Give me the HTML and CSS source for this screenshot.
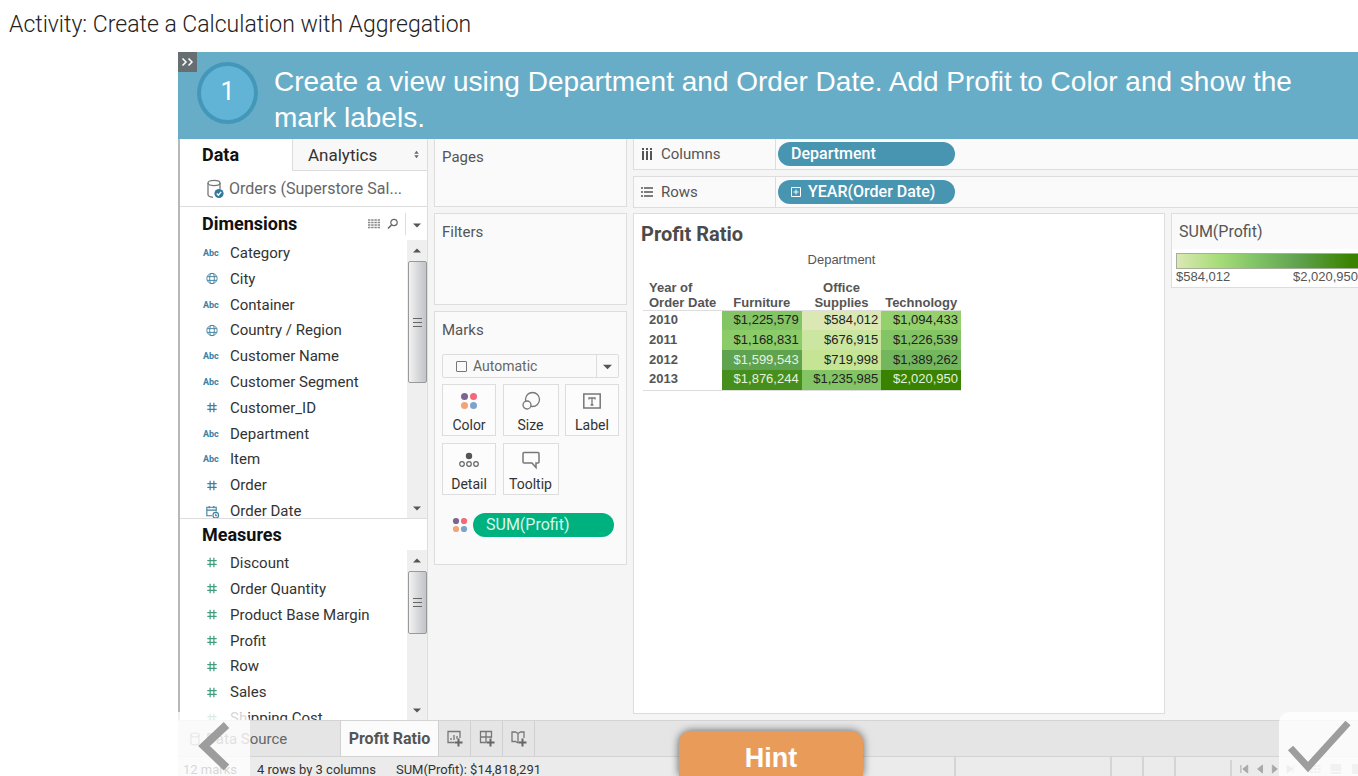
FILE: index.html
```
<!DOCTYPE html>
<html lang="en">
<head>
<meta charset="utf-8">
<title>Activity: Create a Calculation with Aggregation</title>
<link rel="stylesheet" href="styles.css">
</head>
<body>
<svg class="defs" aria-hidden="true">
  <symbol id="hash" viewBox="0 0 16 16"><path d="M6 3v10M10 3v10M3 6h10M3 10h10" fill="none" stroke="currentColor" stroke-width="1.3"/></symbol>
  <symbol id="globe" viewBox="0 0 16 16"><g fill="none" stroke="currentColor" stroke-width="1"><circle cx="8" cy="8" r="5.500"/><ellipse cx="8" cy="8" rx="2.500" ry="5.500"/><path d="M3 6h10M3 10h10"/></g></symbol>
  <symbol id="date" viewBox="0 0 16 16"><g fill="none" stroke="currentColor" stroke-width="1.2"><path d="M8 12.5H2.5v-9h10V8M2.5 6.5h10M5 2v2.500M10 2v2.500"/><circle cx="12" cy="12" r="3"/><path d="M12 10.500v2h1.500"/></g></symbol>
  <symbol id="dots" viewBox="0 0 18 18"><circle cx="4.500" cy="4.500" r="3.500" fill="#7b6591"/><circle cx="13.500" cy="4.500" r="3.500" fill="#f4687a"/><circle cx="4.500" cy="13.500" r="3.500" fill="#f2a377"/><circle cx="13.500" cy="13.500" r="3.500" fill="#7da3cb"/></symbol>
  <symbol id="up" viewBox="0 0 10 10"><path d="M0 8l5-5 5 5z" fill="#555"/></symbol>
  <symbol id="down" viewBox="0 0 10 10"><path d="M0 3h10l-5 5z" fill="#555"/></symbol>
  <symbol id="plus" viewBox="0 0 18 18"><path d="M12.500 8.500v8M8.500 12.500h8" stroke="#666" stroke-width="2" fill="none"/></symbol>
</svg>

<h1 class="title">Activity: Create a Calculation with Aggregation</h1>
<main class="stage">
  <header class="banner">
    <button class="expand" aria-label="Expand"><svg viewBox="0 0 19 20"><path d="M4.500 6.500l3.500 3.500-3.500 3.500M10.500 6.500l3.500 3.500-3.500 3.500" fill="none" stroke="#fff" stroke-width="1.500"/></svg></button>
    <span class="step">1</span>
    <p class="task">Create a view using Department and Order Date. Add Profit to Color and show the mark labels.</p>
  </header>

  <div class="work">
    <aside class="side">
      <div class="tabs">
        <button class="tab on">Data</button>
        <button class="tab">Analytics<svg class="sort" viewBox="0 0 8 12"><path d="M1 5l3-4 3 4zM1 7l3 4 3-4z" fill="#667"/></svg></button>
      </div>
      <div class="source">
        <svg class="db" viewBox="0 0 18 20"><g fill="none" stroke="#777" stroke-width="1.300"><ellipse cx="8" cy="4" rx="6" ry="2.600"/><path d="M2 4v11.500c0 1.500 2 2.500 5 2.800M14 4v6"/></g><circle cx="13" cy="14.500" r="4.600" fill="#2f7ba0"/><path d="M10.800 14.500l1.600 1.700 2.800-3.300" fill="none" stroke="#fff" stroke-width="1.400"/></svg>
        <span>Orders (Superstore Sal...</span>
      </div>
      <section class="pane dims">
        <div class="pane-head">
          <h2>Dimensions</h2>
          <svg class="grid-i" viewBox="0 0 14 12"><path d="M1 2h12M1 4.500h12M1 7h12M1 9.500h12" stroke="#888" stroke-width="1.600" stroke-dasharray="2.400 .8"/></svg>
          <svg class="find" viewBox="0 0 12 12"><circle cx="7" cy="4.500" r="3.200" fill="none" stroke="#666" stroke-width="1.200"/><path d="M4.500 7L1 10.500" stroke="#666" stroke-width="1.600"/></svg>
          <button class="menu" aria-label="Menu"><svg><use href="#down"/></svg></button>
        </div>
        <div class="scroll">
          <ul class="fields">
            <li><b>Abc</b>Category</li>
            <li><svg><use href="#globe"/></svg>City</li>
            <li><b>Abc</b>Container</li>
            <li><svg><use href="#globe"/></svg>Country / Region</li>
            <li><b>Abc</b>Customer Name</li>
            <li><b>Abc</b>Customer Segment</li>
            <li><svg><use href="#hash"/></svg>Customer_ID</li>
            <li><b>Abc</b>Department</li>
            <li><b>Abc</b>Item</li>
            <li><svg><use href="#hash"/></svg>Order</li>
            <li><svg><use href="#date"/></svg>Order Date</li>
          </ul>
          <div class="bar"><svg><use href="#up"/></svg><i class="thumb long"></i><svg class="end"><use href="#down"/></svg></div>
        </div>
      </section>
      <section class="pane meas">
        <div class="pane-head"><h2>Measures</h2></div>
        <div class="scroll">
          <ul class="fields green">
            <li><svg><use href="#hash"/></svg>Discount</li>
            <li><svg><use href="#hash"/></svg>Order Quantity</li>
            <li><svg><use href="#hash"/></svg>Product Base Margin</li>
            <li><svg><use href="#hash"/></svg>Profit</li>
            <li><svg><use href="#hash"/></svg>Row</li>
            <li><svg><use href="#hash"/></svg>Sales</li>
            <li><svg><use href="#hash"/></svg>Shipping Cost</li>
          </ul>
          <div class="bar"><svg><use href="#up"/></svg><i class="thumb"></i><svg class="end"><use href="#down"/></svg></div>
        </div>
      </section>
    </aside>

    <div class="cards">
      <section class="card pages"><h3>Pages</h3></section>
      <section class="card filters"><h3>Filters</h3></section>
      <section class="card marks">
        <h3>Marks</h3>
        <div class="type">
          <i class="square"></i>
          <select aria-label="Mark type"><option>Automatic</option></select>
          <span class="arrow"><svg><use href="#down"/></svg></span>
        </div>
        <div class="buttons">
          <button><svg viewBox="0 0 18 18"><use href="#dots"/></svg>Color</button>
          <button><svg viewBox="0 0 18 18" fill="none" stroke="#777" stroke-width="1.300"><circle cx="10.500" cy="7.500" r="7"/><circle cx="5" cy="13" r="4" fill="#fcfcfc"/></svg>Size</button>
          <button><svg viewBox="0 0 18 18" fill="none" stroke="#777" stroke-width="1.500"><path d="M.8 2h16.400v14H.8z"/><path d="M6 7.500V6h6v1.500M9 6v7M7.500 13h3" stroke-width="1.300"/></svg>Label</button>
          <button><svg viewBox="0 0 20 18"><circle cx="10" cy="5" r="3.200" fill="#555"/><g fill="none" stroke="#666" stroke-width="1.200"><circle cx="3" cy="13" r="2.300"/><circle cx="10" cy="13" r="2.300"/><circle cx="17" cy="13" r="2.300"/></g></svg>Detail</button>
          <button><svg viewBox="0 0 18 18"><path d="M2 1.500h14q1 0 1 1V11q0 1-1 1h-2v4.500L10 12H2q-1 0-1-1V2.500q0-1 1-1z" fill="none" stroke="#777" stroke-width="1.500"/></svg>Tooltip</button>
        </div>
        <div class="encoding"><svg><use href="#dots"/></svg><span class="pill profit">SUM(Profit)</span></div>
      </section>
    </div>

    <div class="canvas">
      <div class="shelf first">
        <span class="shelf-name"><svg viewBox="0 0 12 12"><path d="M2 0v2M6 0v2M10 0v2M2 3v9M6 3v9M10 3v9" stroke="#555" stroke-width="2"/></svg>Columns</span>
        <span class="pill">Department</span>
      </div>
      <div class="shelf">
        <span class="shelf-name"><svg viewBox="0 0 12 12"><path d="M0 2h2M0 6h2M0 10h2M3 2h9M3 6h9M3 10h9" stroke="#555" stroke-width="1.600"/></svg>Rows</span>
        <span class="pill"><svg viewBox="0 0 10 10"><path d="M.5.5h9v9h-9zM5 2.500v5M2.500 5h5" fill="none" stroke="#fff"/></svg>YEAR(Order Date)</span>
      </div>
      <div class="results">
        <section class="view">
          <h2>Profit Ratio</h2>
          <table>
            <thead>
              <tr class="super"><td></td><th colspan="3">Department</th></tr>
              <tr><th class="yr">Year of<br>Order Date</th><th>Furniture</th><th>Office<br>Supplies</th><th>Technology</th></tr>
            </thead>
            <tbody>
              <tr><th>2010</th><td class="g4">$1,225,579</td><td class="g1">$584,012</td><td class="g3">$1,094,433</td></tr>
              <tr><th>2011</th><td class="g3b">$1,168,831</td><td class="g2">$676,915</td><td class="g4">$1,226,539</td></tr>
              <tr><th>2012</th><td class="g6">$1,599,543</td><td class="g2b">$719,998</td><td class="g5">$1,389,262</td></tr>
              <tr><th>2013</th><td class="g7">$1,876,244</td><td class="g4">$1,235,985</td><td class="g8">$2,020,950</td></tr>
            </tbody>
          </table>
        </section>
        <section class="legend">
          <h3>SUM(Profit)</h3>
          <div class="ramp"></div>
          <div class="range"><span>$584,012</span><span>$2,020,950</span></div>
        </section>
      </div>
    </div>
  </div>

  <nav class="sheets">
    <button class="sheet ds"><svg viewBox="0 0 10 14"><g fill="none" stroke="#888" stroke-width="1.200"><ellipse cx="5" cy="3" rx="4" ry="2"/><path d="M1 3v8c0 2.500 8 2.500 8 0V3"/></g></svg>Data Source</button>
    <button class="sheet on">Profit Ratio</button>
    <button class="sheet new" aria-label="New worksheet"><svg viewBox="0 0 18 18"><path d="M8 12.500H2v-11h12V8M5 10V8M8 10V5M11 9V6" fill="none" stroke="#777" stroke-width="1.300"/><use href="#plus"/></svg></button>
    <button class="sheet new" aria-label="New dashboard"><svg viewBox="0 0 18 18"><path d="M8 12.500H2.500v-11h11V8M8 1.500v11M2.500 7h11" fill="none" stroke="#777" stroke-width="1.300"/><use href="#plus"/></svg></button>
    <button class="sheet new" aria-label="New story"><svg viewBox="0 0 18 18"><path d="M8 13l-2.500-1.500H2V2h3.500L8 3.500 10.500 2H14v6M8 3.500V13" fill="none" stroke="#777" stroke-width="1.300"/><use href="#plus"/></svg></button>
  </nav>
  <footer class="status">
    <span>12 marks</span><span>4 rows by 3 columns</span><span>SUM(Profit): $14,818,291</span>
    <div class="cells"><i class="c1"></i><i class="c2"></i><i class="c3"></i><i class="c4"></i>
      <svg class="pager" viewBox="0 0 128 18"><path d="M9 5v8M16 5l-5 4 5 4zM31 5l-5 4 5 4zM41 5l5 4-5 4zM56 5l5 4-5 4zM62 5v8" fill="#aaa" stroke="#aaa"/><path d="M79 6h12M79 9h12M79 12h12" stroke="#bbb" stroke-width="2" stroke-dasharray="3 1"/><path d="M100 4h11v7h-11zM100 12h11v2h-11zM122 4h6v10h-6z" fill="#bbb"/></svg>
    </div>
  </footer>

  <button class="nav back" aria-label="Back"><svg viewBox="0 0 72 65"><path d="M48.500 13L26 34l22.500 21.500" fill="none" stroke="#9d9d9d" stroke-width="8"/></svg></button>
  <button class="hint">Hint</button>
  <button class="nav done" aria-label="Done"><svg viewBox="0 0 79 65"><path d="M11.500 36L29 55 69 11" fill="none" stroke="#9d9d9d" stroke-width="7"/></svg></button>
</main>
</body>
</html>
```
FILE: styles.css
```
* { box-sizing: border-box; }
body {
  margin: 0;
  height: 100vh;
  display: flex;
  flex-direction: column;
  overflow: hidden;
  background: #fff;
  color: #333;
  font: 15px/20px Roboto, sans-serif;
}
h1, h2, h3, p, ul { margin: 0; padding: 0; font-weight: 400; }
ul { list-style: none; }
button { font: inherit; color: inherit; background: none; border: 0; padding: 0; margin: 0; border-radius: 0; }
.defs { display: none; }

.title {
  flex: 0 0 52px;
  padding-left: 9px;
  font-size: 23px;
  line-height: 50px;
  font-weight: 300;
  color: #222;
}
.stage {
  position: relative;
  flex: 1;
  min-height: 0;
  margin-left: 178px;
  display: flex;
  flex-direction: column;
  background: #f5f5f5;
  overflow: hidden;
}

.banner {
  flex: none;
  display: flex;
  align-items: flex-start;
  padding-bottom: 3px;
  background: #68adc8;
  color: #fff;
}
.expand { width: 19px; height: 20px; background: #676e71; }
.expand svg { display: block; width: 19px; height: 20px; }
.step {
  width: 61px;
  height: 62px;
  margin: 10px 16px 0 0;
  border: 4px solid #4398ba;
  border-radius: 50%;
  background: #62b4d6;
  font-size: 25px;
  line-height: 52px;
  text-align: center;
}
.task {
  flex: 1;
  padding: 12px 40px 0 0;
  font: 28px/36px "Liberation Sans", Arial, sans-serif;
}

.work {
  flex: 1;
  min-height: 0;
  display: grid;
  grid-template-columns: 250px 193px 1fr;
  column-gap: 6px;
}

.side {
  display: flex;
  flex-direction: column;
  min-height: 0;
  background: #fff;
  border-left: 2px solid #b5b9bb;
  border-right: 1px solid #ddd;
}
.tabs { flex: none; display: flex; height: 32px; }
.tab { font-size: 17px; line-height: 30px; }
.tab.on { width: 112px; padding-left: 22px; text-align: left; font-size: 18px; font-weight: 700; color: #111; }
.tab:not(.on) {
  flex: 1;
  display: flex;
  align-items: center;
  padding-left: 15px;
  background: #f8f8f8;
  border: solid #ddd;
  border-width: 0 0 1px 1px;
}
.sort { width: 7px; height: 9px; margin: 0 7px 0 auto; }
.source {
  flex: none;
  display: flex;
  align-items: center;
  gap: 5px;
  height: 36px;
  padding-left: 26px;
  border-bottom: 1px solid #ddd;
  font-size: 16px;
  color: #666;
}
.db { width: 18px; height: 20px; }
.pane { display: flex; flex-direction: column; min-height: 0; }
.dims { flex: 0 0 312px; border-bottom: 1px solid #ddd; }
.meas { flex: 1; }
.pane-head { flex: none; display: flex; align-items: center; height: 33px; padding-left: 22px; }
.pane-head h2 { flex: 1; font-size: 18px; font-weight: 700; color: #111; }
.meas .pane-head { height: 31px; }
.grid-i { width: 14px; height: 12px; }
.find { width: 12px; height: 12px; margin: 0 6px; }
.menu { width: 22px; height: 22px; border-left: 1px solid #ddd; }
.menu svg { width: 8px; height: 8px; }
.scroll { flex: 1; min-height: 0; display: flex; overflow: hidden; }
.fields { flex: 1; height: 284px; display: flex; flex-direction: column; }
.fields.green { height: 181px; }
.fields li { flex: 1; display: flex; align-items: center; gap: 9px; padding-left: 23px; white-space: nowrap; }
.fields li b { width: 18px; font-size: 9px; color: #40809f; }
.fields li svg { width: 18px; height: 15px; color: #40809f; }
.fields.green li svg { color: #3f9f7d; }
.bar {
  width: 20px;
  display: flex;
  flex-direction: column;
  align-items: center;
  padding: 6px 0;
  background: #efefef;
}
.bar svg { width: 8px; height: 8px; flex: none; }
.bar .end { margin-top: auto; }
.thumb {
  flex: none;
  width: 19px;
  height: 63px;
  margin-top: 7px;
  display: grid;
  place-items: center;
  border: 1px solid #999;
  border-radius: 2px;
  background: linear-gradient(90deg, #f2f2f2, #d4d5d8 60%, #c3c4c6);
}
.thumb.long { height: 122px; }
.thumb::before { content: ""; width: 9px; height: 9px; background: repeating-linear-gradient(#666 0 1px, transparent 1px 4px); }

.cards { display: flex; flex-direction: column; gap: 6px; }
.card { padding: 8px 7px; background: #fafafa; border: 1px solid #ddd; color: #555; }
.pages { height: 68px; border-top: 0; }
.filters { height: 92px; }
.marks { height: 254px; }
h3 { font-size: 15px; color: #555; }
.type {
  display: flex;
  align-items: center;
  height: 24px;
  margin-top: 14px;
  border: 1px solid #ddd;
  border-radius: 2px;
}
.square { width: 11px; height: 11px; margin-left: 13px; border: 1px solid #777; border-radius: 1px; }
.type select {
  flex: 1;
  appearance: none;
  border: 0;
  padding: 0 6px;
  background: none;
  color: #666;
  font: 14px/20px Roboto, sans-serif;
}
.arrow { width: 22px; height: 22px; display: grid; place-items: center; border-left: 1px solid #ddd; }
.arrow svg { width: 9px; height: 9px; }
.buttons { display: grid; grid-template-columns: 54px 56px 54px; justify-content: space-between; row-gap: 7px; margin-top: 6px; }
.buttons button {
  display: flex;
  flex-direction: column;
  align-items: center;
  gap: 6px;
  height: 52px;
  padding-top: 7px;
  border: 1px solid #ddd;
  background: #fcfcfc;
  color: #333;
  font-size: 14px;
  line-height: 18px;
}
.buttons svg { width: 20px; height: 18px; overflow: visible; }
.encoding { display: flex; align-items: center; gap: 5px; margin: 18px 0 0 10px; }
.encoding > svg { width: 16px; height: 16px; }
.pill {
  display: flex;
  align-items: center;
  gap: 7px;
  width: 177px;
  height: 24px;
  padding-left: 13px;
  border-radius: 12px;
  background: #4895b2;
  color: #fff;
  font-size: 16px;
}
.pill svg { width: 10px; height: 10px; }
.shelf .pill { font-weight: 500; }
.pill.profit { width: 141px; background: #00b180; color: #d8f7ea; }

.canvas { display: flex; flex-direction: column; min-width: 0; min-height: 0; padding-bottom: 6px; }
.shelf {
  flex: none;
  display: flex;
  align-items: center;
  height: 32px;
  margin-bottom: 5px;
  background: #fafafa;
  border: 1px solid #ddd;
  border-right: 0;
}
.shelf.first { height: 31px; margin-bottom: 6px; border-top: 0; }
.shelf-name {
  display: flex;
  align-items: center;
  align-self: stretch;
  gap: 8px;
  width: 142px;
  margin-right: 2px;
  padding-left: 7px;
  border-right: 1px solid #ddd;
  color: #555;
}
.shelf-name svg { width: 12px; height: 12px; }
.results { flex: 1; min-height: 0; display: flex; align-items: flex-start; gap: 6px; }
.view { flex: 1; align-self: stretch; padding: 8px 7px; background: #fff; border: 1px solid #ddd; }
.view h2 { font-size: 20px; line-height: 24px; font-weight: 700; color: #4b4b4b; }
table { margin: 5px 0 0 2px; border-collapse: collapse; table-layout: fixed; width: 318px; font: 13px/15px "Liberation Sans", Arial, sans-serif; color: #222; }
th { padding: 0; font-weight: 700; color: #555; vertical-align: bottom; }
.super td { width: 79px; }
.super th { height: 24px; padding-bottom: 8px; font-weight: 400; vertical-align: middle; }
th.yr, tbody th { text-align: left; padding-left: 6px; }
thead tr:last-child th { height: 35px; padding-bottom: 0; white-space: nowrap; }
tbody { border: solid #ddd; border-width: 1px 0; }
tbody th, tbody td { height: 20px; padding-top: 0; padding-bottom: 2px; vertical-align: middle; }
tbody td { padding-left: 0; padding-right: 3px; text-align: right; }
.g1 { background: #dbe8b4; }
.g2 { background: #cbe6a0; }
.g2b { background: #c5e594; }
.g3 { background: #94d06c; }
.g3b { background: #8bcb68; }
.g4 { background: #83c464; }
.g5 { background: #73b65e; }
.g6 { background: #5fa24f; color: #e4f3df; }
.g7 { background: #478f1d; color: #e4f3df; }
.g8 { background: #3a8300; color: #e4f3df; }
.legend { width: 187px; height: 75px; border: 1px solid #ddd; border-right: 0; background: #fff; }
.legend h3 { height: 35px; padding: 8px 7px; font-size: 16px; background: #fafafa; }
.ramp {
  height: 16px;
  margin: 4px 0 0 4px;
  border: 1px solid #a9ad9b;
  border-right: 0;
  background: linear-gradient(90deg, #dbe8b4, #a9dd7a 22%, #83c567 42%, #62a352 66%, #3a8300 96%);
}
.range { display: flex; justify-content: space-between; padding-left: 4px; font: 13px/16px "Liberation Sans", Arial, sans-serif; color: #555; }

.sheets { flex: none; display: flex; height: 37px; background: #e5e5e5; border: solid #d4d4d4; border-width: 1px 0; }
.sheet { border-right: 1px solid #d0d0d0; }
.sheet.ds { display: flex; align-items: center; gap: 6px; width: 163px; padding-left: 12px; color: #666; }
.sheet.ds svg { width: 10px; height: 14px; }
.sheet.on { width: 98px; background: #fbfbfb; font-size: 16px; font-weight: 700; color: #555; }
.sheet.new { display: grid; place-items: center; width: 32px; }
.sheet.new svg { width: 18px; height: 18px; }
.status {
  flex: 0 0 19px;
  display: flex;
  gap: 20px;
  padding-left: 5px;
  overflow: hidden;
  background: #ebebeb;
  font-size: 13px;
  line-height: 26px;
  white-space: nowrap;
}
.cells { display: flex; margin-left: auto; }
.cells i { border-left: 2px solid #d5d5d5; }
.c1 { width: 156px; }
.c2 { width: 32px; }
.c3 { width: 32px; }
.c4 { width: 56px; }
.pager { width: 128px; height: 18px; margin-top: 3px; border-left: 2px solid #d5d5d5; }

.nav { position: absolute; bottom: 0; height: 64px; background: rgba(255, 255, 255, .8); }
.nav svg { display: block; height: 65px; width: 100%; }
.back { left: 0; width: 72px; border-radius: 0 10px 0 0; }
.done { right: 0; width: 79px; border-radius: 10px 0 0 0; }
.hint {
  position: absolute;
  bottom: 0;
  left: 501px;
  width: 184px;
  height: 45px;
  padding-top: 7px;
  border-radius: 12px 12px 0 0;
  background: #e99c5a;
  box-shadow: 0 0 9px rgba(0, 0, 0, .6);
  color: #fff;
  font: 700 27px/40px "Liberation Sans", Arial, sans-serif;
}
```
